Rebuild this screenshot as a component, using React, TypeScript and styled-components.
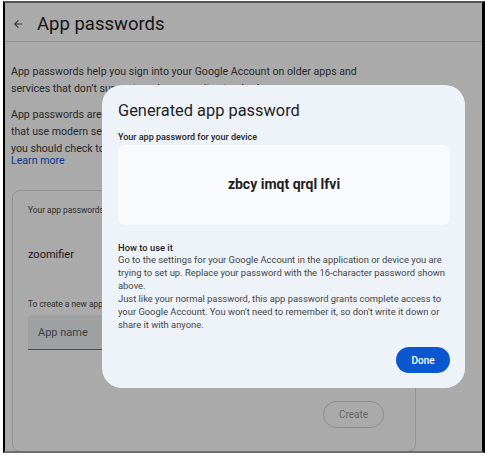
import styled, { createGlobalStyle } from "styled-components";

const GlobalStyle = createGlobalStyle`
  html, body {
    margin: 0;
    padding: 0;
    background: #fff;
  }
  * {
    box-sizing: border-box;
  }
`;

const Frame = styled.div`
  position: relative;
  margin: 1px 0 0 3px;
  width: 482px;
  height: 452px;
  border-left: 2px solid #000;
  border-right: 3px solid #000;
  border-top: 2px solid #555;
  border-bottom: 2px solid #6e6e6e;
  background: #fff;
  overflow: hidden;
  font-family: Roboto, "Noto Sans", sans-serif;
  color: #1f1f1f;
`;

const Header = styled.header`
  display: flex;
  align-items: center;
  gap: 13px;
  height: 39px;
  padding: 3px 0 0 7px;
  border-bottom: 1px solid #d9d9d9;
`;

const BackButton = styled.span`
  display: flex;
  width: 12px;
  color: #444746;
`;

const Title = styled.h1`
  margin: 0;
  font-size: 18.5px;
  font-weight: 400;
`;

const Body = styled.main`
  padding: 21px 6px 0;
`;

const Paragraph = styled.p`
  margin: 0 0 9px;
  white-space: nowrap;
  font-size: 10.6px;
  line-height: 17px;
  color: #3c3c3c;
`;

const LearnMore = styled.a`
  display: block;
  color: #0b57d0;
  text-decoration: none;
  font-size: 10.6px;
  line-height: 14px;
  margin-top: -12px;
`;

const Card = styled.section`
  margin: 22px 0 0 1px;
  width: 404px;
  height: 262px;
  border: 1px solid #dadce0;
  border-radius: 8px;
  padding: 14px 15px 0;
  display: flex;
  flex-direction: column;
`;

const SmallLabel = styled.div`
  font-size: 8.4px;
  line-height: 11px;
  color: #444746;
  white-space: nowrap;
`;

const AppName = styled.div`
  margin: 31px 0 37px;
  font-size: 11px;
  line-height: 15px;
  color: #1f1f1f;
`;

const Input = styled.div`
  margin-top: 5px;
  height: 35px;
  width: 240px;
  background: #eef0f3;
  border-bottom: 1px solid #747775;
  border-radius: 4px 4px 0 0;
  display: flex;
  align-items: center;
  padding-left: 10px;
  font-size: 11px;
  color: #5f6368;
`;

const CreateButton = styled.button`
  align-self: flex-end;
  margin: 51px 16px 0 0;
  width: 61px;
  height: 27px;
  border-radius: 14px;
  border: 1px solid #d4d4d4;
  background: transparent;
  font-family: inherit;
  font-size: 10px;
  color: #9a9a9a;
`;

const Scrim = styled.div`
  position: absolute;
  inset: 0;
  background: rgba(0, 0, 0, 0.335);
`;

const Dialog = styled.div`
  position: absolute;
  left: 97px;
  top: 82px;
  width: 363px;
  height: 303px;
  border-radius: 20px;
  background: #eef2f9;
  padding: 15px 15px 0 16px;
  display: flex;
  flex-direction: column;
`;

const DialogTitle = styled.h2`
  margin: 0;
  font-size: 16.4px;
  font-weight: 400;
  line-height: 22px;
  color: #1f1f1f;
`;

const DeviceLabel = styled.div`
  margin-top: 10px;
  font-size: 9px;
  font-weight: 500;
  color: #1f1f1f;
`;

const PasswordBox = styled.div`
  margin-top: 3px;
  height: 80px;
  border-radius: 7px;
  background: #f8fafd;
  display: flex;
  align-items: center;
  justify-content: center;
  font-size: 14px;
  font-weight: 700;
  color: #1f1f1f;
  padding-bottom: 2px;
`;

const HowTitle = styled.div`
  margin-top: 17px;
  font-size: 9.4px;
  font-weight: 500;
  color: #1f1f1f;
`;

const HowText = styled.p`
  margin: 0;
  font-size: 9.4px;
  line-height: 13px;
  color: #444746;
`;

const Actions = styled.div`
  display: flex;
  justify-content: flex-end;
  margin-top: 16px;
`;

const DoneButton = styled.button`
  width: 54px;
  height: 26px;
  border: none;
  border-radius: 13px;
  background: #0b57d0;
  color: #fff;
  font-family: inherit;
  font-size: 10px;
  font-weight: 500;
`;

const ArrowBack = () => (
  <svg width="12" height="12" viewBox="0 0 24 24" fill="currentColor">
    <path d="M20 11H7.83l5.59-5.59L12 4l-8 8 8 8 1.41-1.41L7.83 13H20v-2z" />
  </svg>
);

const App = () => {
  return (
    <>
      <GlobalStyle />
      <Frame>
        <Header>
          <BackButton>
            <ArrowBack />
          </BackButton>
          <Title>App passwords</Title>
        </Header>
        <Body>
          <Paragraph>
            App passwords help you sign into your Google Account on older apps and
            <br />
            services that don’t support modern security standards.
          </Paragraph>
          <Paragraph>
            App passwords are less secure than using up-to-date apps and services
            <br />
            that use modern security standards. Before you create an app password,
            <br />
            you should check to see if your app needs this in order to sign in.
          </Paragraph>
          <LearnMore href="#">Learn more</LearnMore>
          <Card>
            <SmallLabel>Your app passwords</SmallLabel>
            <AppName>zoomifier</AppName>
            <SmallLabel>
              To create a new app specific password, type a name for it below...
            </SmallLabel>
            <Input>App name</Input>
            <CreateButton>Create</CreateButton>
          </Card>
        </Body>
        <Scrim />
        <Dialog>
          <DialogTitle>Generated app password</DialogTitle>
          <DeviceLabel>Your app password for your device</DeviceLabel>
          <PasswordBox>zbcy imqt qrql lfvi</PasswordBox>
          <HowTitle>How to use it</HowTitle>
          <HowText>
            Go to the settings for your Google Account in the application or
            device you are trying to set up. Replace your password with the
            16-character password shown above.
          </HowText>
          <HowText>
            Just like your normal password, this app password grants complete
            access to your Google Account. You won't need to remember it, so
            don't write it down or share it with anyone.
          </HowText>
          <Actions>
            <DoneButton>Done</DoneButton>
          </Actions>
        </Dialog>
      </Frame>
    </>
  );
};

export default App;
